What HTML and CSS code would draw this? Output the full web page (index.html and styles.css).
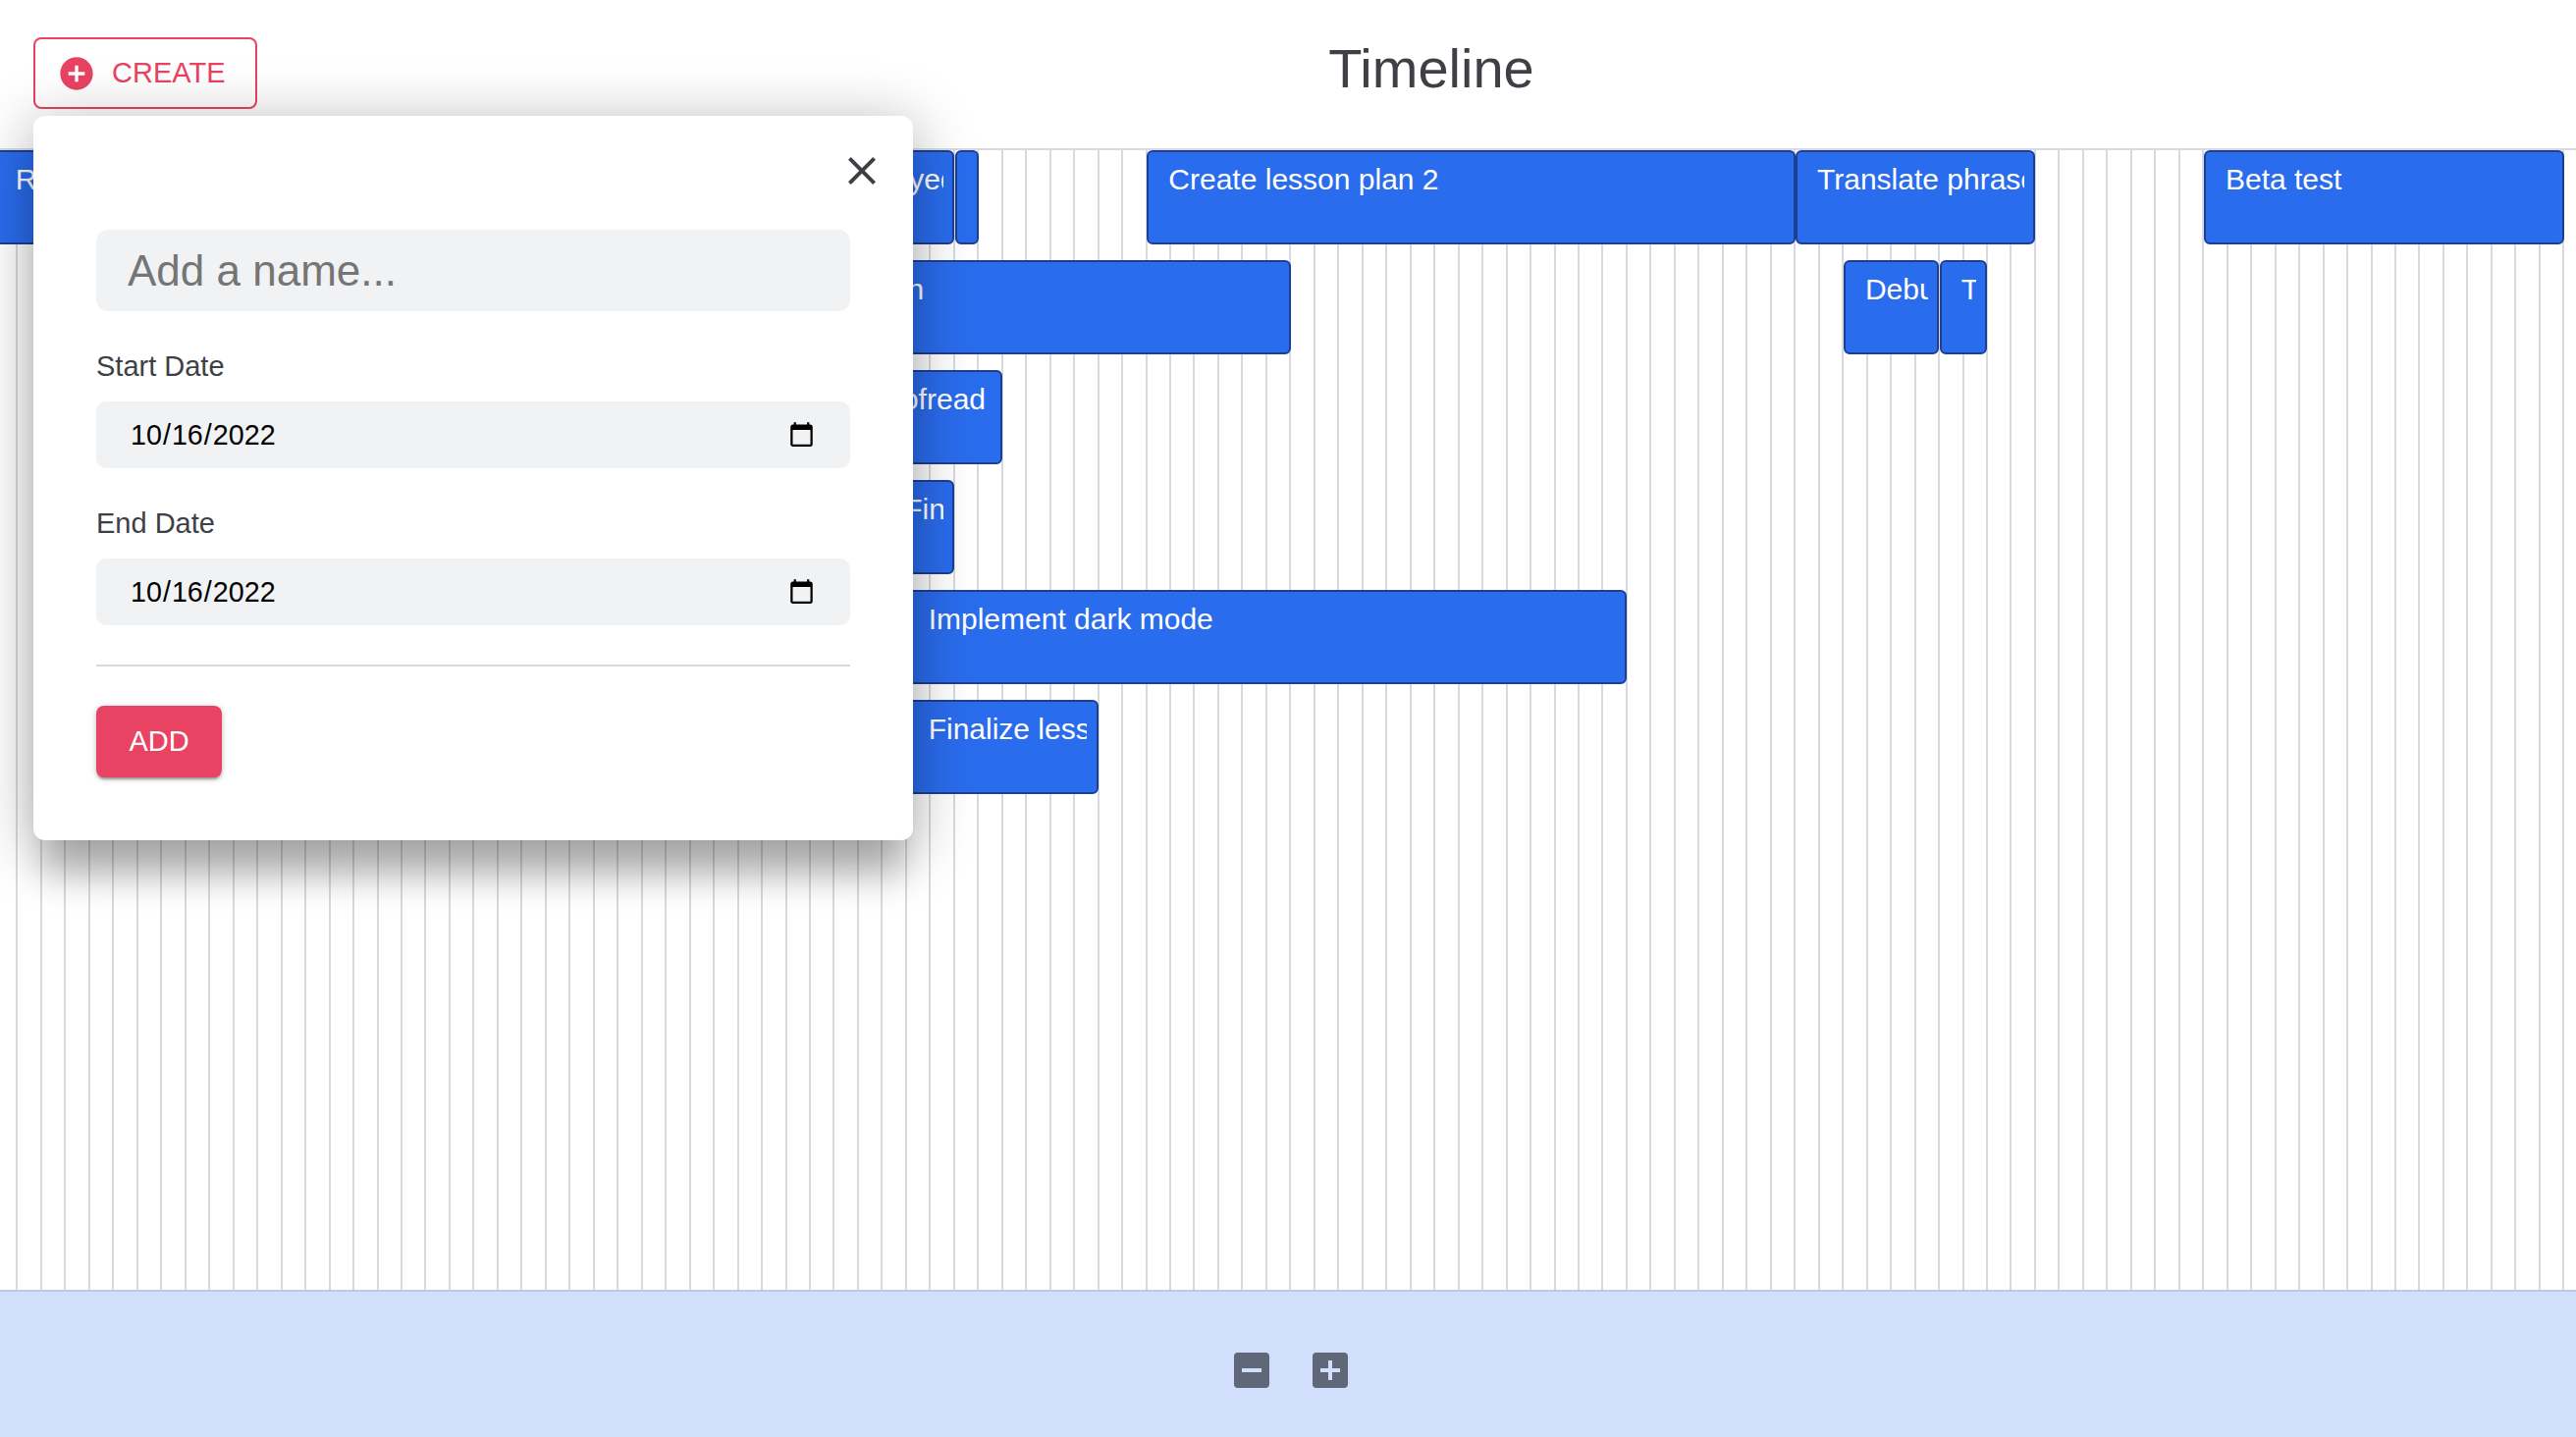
FILE: index.html
```html
<!DOCTYPE html>
<html lang="en">
<head>
    <meta charset="UTF-8">
    <meta name="viewport" content="width=device-width, initial-scale=1.0">
    <title>Timeline</title>
    <link rel="stylesheet" href="styles.css">
</head>
<body>
    <header class="header">
        <button class="create-btn" type="button">
            <svg class="create-icon" viewBox="0 0 24 24"><path d="M12 2C6.48 2 2 6.48 2 12s4.48 10 10 10 10-4.48 10-10S17.52 2 12 2zm5 11h-4v4h-2v-4H7v-2h4V7h2v4h4v2z"/></svg>
            CREATE
        </button>
        <h1 class="title">Timeline</h1>
    </header>

    <div class="popover">
        <button class="close-btn" type="button">
            <svg viewBox="0 0 24 24"><path d="M19 6.41 17.59 5 12 10.59 6.41 5 5 6.41 10.59 12 5 17.59 6.41 19 12 13.41 17.59 19 19 17.59 13.41 12z"/></svg>
        </button>
        <input class="name-input" type="text" placeholder="Add a name...">
        <label class="field-label">Start Date</label>
        <input class="date-input" type="date" value="2022-10-16">
        <label class="field-label">End Date</label>
        <input class="date-input" type="date" value="2022-10-16">
        <hr class="divider">
        <button class="add-btn" type="button">ADD</button>
    </div>

    <main class="timeline">
        <div class="timeline-grid">
            <div class="bar" style="grid-column:1/35;grid-row:1"><span>Research</span></div>
            <div class="bar" style="grid-column:35/41;grid-row:1"><span>Deployed</span></div>
            <div class="bar" style="grid-column:41/42;grid-row:1"></div>
            <div class="bar" style="grid-column:49/76;grid-row:1"><span>Create lesson plan 2</span></div>
            <div class="bar" style="grid-column:76/86;grid-row:1"><span>Translate phrases</span></div>
            <div class="bar" style="grid-column:93/108;grid-row:1"><span>Beta test</span></div>

            <div class="bar" style="grid-column:35/55;grid-row:2"><span>Design</span></div>
            <div class="bar" style="grid-column:78/82;grid-row:2"><span>Debug</span></div>
            <div class="bar" style="grid-column:82/84;grid-row:2"><span>Test</span></div>

            <div class="bar" style="grid-column:36/43;grid-row:3"><span>Proofread</span></div>
            <div class="bar" style="grid-column:38/41;grid-row:4"><span>Finalize</span></div>
            <div class="bar" style="grid-column:39/69;grid-row:5"><span>Implement dark mode</span></div>
            <div class="bar" style="grid-column:39/47;grid-row:6"><span>Finalize lesson</span></div>
        </div>
    </main>

    <footer class="zoom-bar">
        <button class="zoom-btn" type="button">
            <svg viewBox="0 0 36 36"><path fill-rule="evenodd" d="M4 0h28a4 4 0 0 1 4 4v28a4 4 0 0 1-4 4H4a4 4 0 0 1-4-4V4a4 4 0 0 1 4-4zM8 16v4h20v-4z"/></svg>
        </button>
        <button class="zoom-btn" type="button">
            <svg viewBox="0 0 36 36"><path fill-rule="evenodd" d="M4 0h28a4 4 0 0 1 4 4v28a4 4 0 0 1-4 4H4a4 4 0 0 1-4-4V4a4 4 0 0 1 4-4zM16 8v8H8v4h8v8h4v-8h8v-4h-8V8z"/></svg>
        </button>
    </footer>
</body>
</html>
```

FILE: styles.css
```css
* {
    box-sizing: border-box;
}
html, body {
    height: 100%;
}
body {
    margin: 0;
    display: flex;
    flex-direction: column;
    overflow: hidden;
    background: #fff;
    font-family: "Liberation Sans", Arial, sans-serif;
    color: #3f3f46;
}
button {
    font-family: inherit;
    cursor: pointer;
}

/* header */
.header {
    height: 151px;
    flex: none;
    display: flex;
    align-items: flex-start;
    padding: 38px 0 0 34px;
}
.create-btn {
    width: 228px;
    height: 73px;
    display: flex;
    align-items: center;
    gap: 16px;
    padding: 0 0 0 22px;
    margin-right: 30px;
    background: #fff;
    border: 2px solid #e84362;
    border-radius: 8px;
    color: #e84362;
    font-size: 29px;
}
.create-icon {
    width: 40px;
    height: 40px;
    fill: #e84362;
}
.title {
    flex: 1;
    margin: 0;
    text-align: center;
    font-size: 56px;
    font-weight: 400;
    line-height: 64px;
    color: #3f3f46;
}

/* popover */
.popover {
    position: absolute;
    top: 118px;
    left: 34px;
    width: 896px;
    height: 738px;
    z-index: 10;
    display: flex;
    flex-direction: column;
    align-items: flex-start;
    padding: 116px 64px 0 64px;
    background: #fff;
    border-radius: 12px;
    box-shadow: 0 46px 34px -10px rgba(0, 0, 0, 0.2), 0 10px 60px 4px rgba(0, 0, 0, 0.28);
}
.close-btn {
    position: absolute;
    top: 32px;
    right: 28px;
    width: 48px;
    height: 48px;
    padding: 0;
    border: none;
    background: none;
}
.close-btn svg {
    display: block;
    fill: #3f3f46;
}
.name-input, .date-input {
    width: 100%;
    border: none;
    outline: none;
    background: #f1f2f4;
    font-family: inherit;
}
.name-input {
    height: 83px;
    padding: 0 32px;
    border-radius: 12px;
    font-size: 44px;
}
.name-input::placeholder {
    color: #757575;
}
.date-input {
    height: 68px;
    padding: 0 33px 0 34px;
    border-radius: 10px;
    font-size: 28.7px;
    color: #000;
}
.field-label {
    margin: 39px 0 19px;
    font-size: 29px;
    line-height: 34px;
    color: #3f3f46;
}
.divider {
    width: 100%;
    height: 2px;
    margin: 40px 0;
    border: none;
    background: #d9d9e0;
}
.add-btn {
    width: 128px;
    height: 73px;
    padding: 0;
    border: none;
    border-radius: 8px;
    background: #e84362;
    color: #fff;
    font-size: 29px;
    box-shadow: 0 3px 2px -1px rgba(0, 0, 0, 0.25), 0 2px 4px rgba(0, 0, 0, 0.16), 0 1px 8px rgba(0, 0, 0, 0.12);
}

/* timeline */
.timeline {
    flex: 1;
    min-height: 0;
    overflow: hidden;
    border-top: 2px solid #d9d9e0;
}
.timeline-grid {
    width: 2642.76px;
    height: 100%;
    margin-left: -8.17px;
    display: grid;
    grid-template-columns: repeat(108, 24.47px);
    grid-auto-rows: 96px;
    row-gap: 16px;
    align-content: start;
    background: repeating-linear-gradient(to right, #d9d9e0 0, #d9d9e0 2px, transparent 2px, transparent 24.47px);
}
.bar {
    min-width: 0;
    margin: 0 -1.5px 0 2px;
    border: 2px solid #1c3f91;
    border-radius: 6px;
    background: #2a6cee;
    color: #fff;
    font-size: 30px;
    line-height: 34px;
}
.bar span {
    display: block;
    margin: 11px 9.5px 0 20px;
    overflow: hidden;
    white-space: nowrap;
}

/* zoom controls */
.zoom-bar {
    height: 150px;
    flex: none;
    display: flex;
    justify-content: center;
    gap: 44px;
    padding: 62px 0 0 6px;
    border-top: 2px solid #b9c9e6;
    background: #d1defc;
}
.zoom-btn {
    width: 36px;
    height: 36px;
    padding: 0;
    border: none;
    background: none;
}
.zoom-btn svg {
    display: block;
    fill: #5f6778;
}
```
